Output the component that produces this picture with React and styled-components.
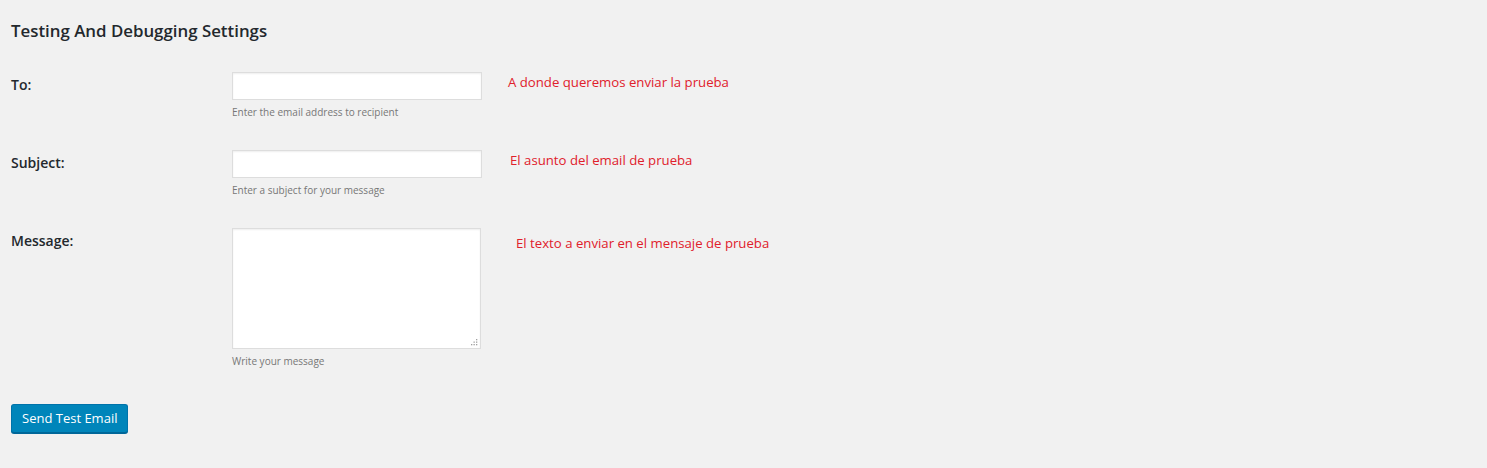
import React from 'react'
import styled, { createGlobalStyle } from 'styled-components'

const GlobalStyle = createGlobalStyle`
  html, body {
    margin: 0;
    padding: 0;
    background: #f1f1f1;
  }
  body {
    font-family: "Open Sans", "Liberation Sans", sans-serif;
    color: #23282d;
    font-size: 13px;
  }
`

const Wrap = styled.div`
  padding: 20px 11px 30px;
`

const Heading = styled.h2`
  margin: 0;
  font-size: 16.85px;
  line-height: 22px;
  font-weight: 600;
  color: #23282d;
`

const Form = styled.div`
  margin-top: 15px;
  display: flex;
  flex-direction: column;
`

const Row = styled.div`
  display: flex;
  align-items: flex-start;
`

const Label = styled.div`
  width: 221px;
  padding-top: 19px;
  font-size: 14px;
  line-height: 18px;
  font-weight: 600;
  color: #23282d;
`

const Field = styled.div`
  padding: 15px 0;
  display: flex;
  flex-direction: column;
`

const Input = styled.input`
  box-sizing: border-box;
  width: 250px;
  height: 28px;
  margin: 0;
  border: 1px solid #ddd;
  background: #fff;
  box-shadow: inset 0 1px 2px rgba(0, 0, 0, 0.07);
  outline: none;
`

const AreaBox = styled.div`
  position: relative;
  width: 249px;
  height: 121px;
`

const TextArea = styled.textarea`
  box-sizing: border-box;
  width: 100%;
  height: 100%;
  margin: 0;
  border: 1px solid #ddd;
  background: #fff;
  box-shadow: inset 0 1px 2px rgba(0, 0, 0, 0.07);
  resize: none;
  outline: none;
  display: block;
`

const Grip = styled.svg`
  position: absolute;
  right: 3px;
  bottom: 3px;
  pointer-events: none;
`

const Description = styled.p`
  margin: 4px 0 0;
  font-size: 10px;
  line-height: 16px;
  color: #777;
`

const Note = styled.div`
  margin-left: ${props => props.offset}px;
  padding-top: ${props => props.top}px;
  font-size: 13.2px;
  line-height: 18px;
  color: #e0202b;
`

const Button = styled.button`
  margin-top: 20px;
  height: 29px;
  padding: 0 10px 1px;
  font-family: "Open Sans", "Liberation Sans", sans-serif;
  font-size: 13px;
  color: #fff;
  background: #0085ba;
  border: 1px solid #0073aa;
  border-bottom-color: #006799;
  border-radius: 3px;
  box-shadow: 0 1px 0 #006799;
  cursor: pointer;
`

const rows = [
  {
    label: 'To:',
    desc: 'Enter the email address to recipient',
    note: 'A donde queremos enviar la prueba',
    offset: 26,
    top: 16,
  },
  {
    label: 'Subject:',
    desc: 'Enter a subject for your message',
    note: 'El asunto del email de prueba',
    offset: 28,
    top: 16,
  },
  {
    label: 'Message:',
    desc: 'Write your message',
    note: 'El texto a enviar en el mensaje de prueba',
    offset: 35,
    top: 21,
    area: true,
  },
]

function MessageArea() {
  return (
    <AreaBox>
      <TextArea />
      <Grip width="7" height="7" viewBox="0 0 7 7">
        <g fill="#a0a0a0">
          <rect x="5" y="0" width="1.3" height="1.3" />
          <rect x="2.5" y="2.5" width="1.3" height="1.3" />
          <rect x="5" y="2.5" width="1.3" height="1.3" />
          <rect x="0" y="5" width="1.3" height="1.3" />
          <rect x="2.5" y="5" width="1.3" height="1.3" />
          <rect x="5" y="5" width="1.3" height="1.3" />
        </g>
      </Grip>
    </AreaBox>
  )
}

export default function App() {
  return (
    <Wrap>
      <GlobalStyle />
      <Heading>Testing And Debugging Settings</Heading>
      <Form>
        {rows.map(r => (
          <Row key={r.label}>
            <Label>{r.label}</Label>
            <Field>
              {r.area ? <MessageArea /> : <Input type="text" />}
              <Description>{r.desc}</Description>
            </Field>
            <Note offset={r.offset} top={r.top}>{r.note}</Note>
          </Row>
        ))}
        <div>
          <Button>Send Test Email</Button>
        </div>
      </Form>
    </Wrap>
  )
}
